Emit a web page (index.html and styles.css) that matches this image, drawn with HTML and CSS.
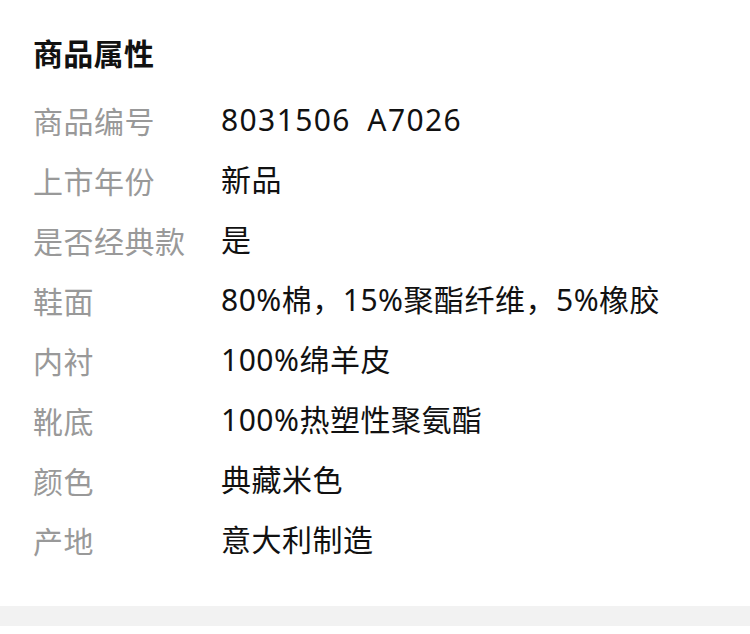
FILE: index.html
```html
<!DOCTYPE html>
<html lang="zh-CN">
<head>
<meta charset="utf-8">
<link rel="stylesheet" href="styles.css">
</head>
<body>
<section class="props">
  <h2 class="title">商品属性</h2>
  <dl class="list">
    <div class="row"><dt>商品编号</dt><dd class="code">8031506&ensp;A7026</dd></div>
    <div class="row"><dt>上市年份</dt><dd>新品</dd></div>
    <div class="row"><dt>是否经典款</dt><dd>是</dd></div>
    <div class="row"><dt>鞋面</dt><dd>80%棉，15%聚酯纤维，5%橡胶</dd></div>
    <div class="row"><dt>内衬</dt><dd>100%绵羊皮</dd></div>
    <div class="row"><dt>靴底</dt><dd>100%热塑性聚氨酯</dd></div>
    <div class="row"><dt>颜色</dt><dd>典藏米色</dd></div>
    <div class="row"><dt>产地</dt><dd>意大利制造</dd></div>
  </dl>
</section>
<div class="band"></div>
</body>
</html>
```
FILE: styles.css
```css
html, body {
  margin: 0;
  padding: 0;
  background: #fff;
}
body {
  font-family: "Noto Sans", "Noto Sans CJK SC", sans-serif;
}
.props {
  padding: 22px 0 36px 33px;
}
.title {
  margin: 0 0 8px 0;
  font-family: "Noto Sans CJK SC", sans-serif;
  font-size: 30px;
  font-weight: 700;
  letter-spacing: 0.3px;
  line-height: 60px;
  color: #111;
}
.list {
  margin: 0;
}
.row {
  display: flex;
  height: 60px;
  align-items: center;
  font-size: 30px;
  letter-spacing: 0.5px;
  line-height: 60px;
}
.row dt {
  width: 188px;
  flex: none;
  color: #999;
  font-family: "Noto Sans CJK SC", sans-serif;
}
.row dd {
  margin: 0;
  color: #111;
}
.row dd.code {
  letter-spacing: 1.4px;
}
.band {
  height: 20px;
  background: #f2f2f2;
}
```
